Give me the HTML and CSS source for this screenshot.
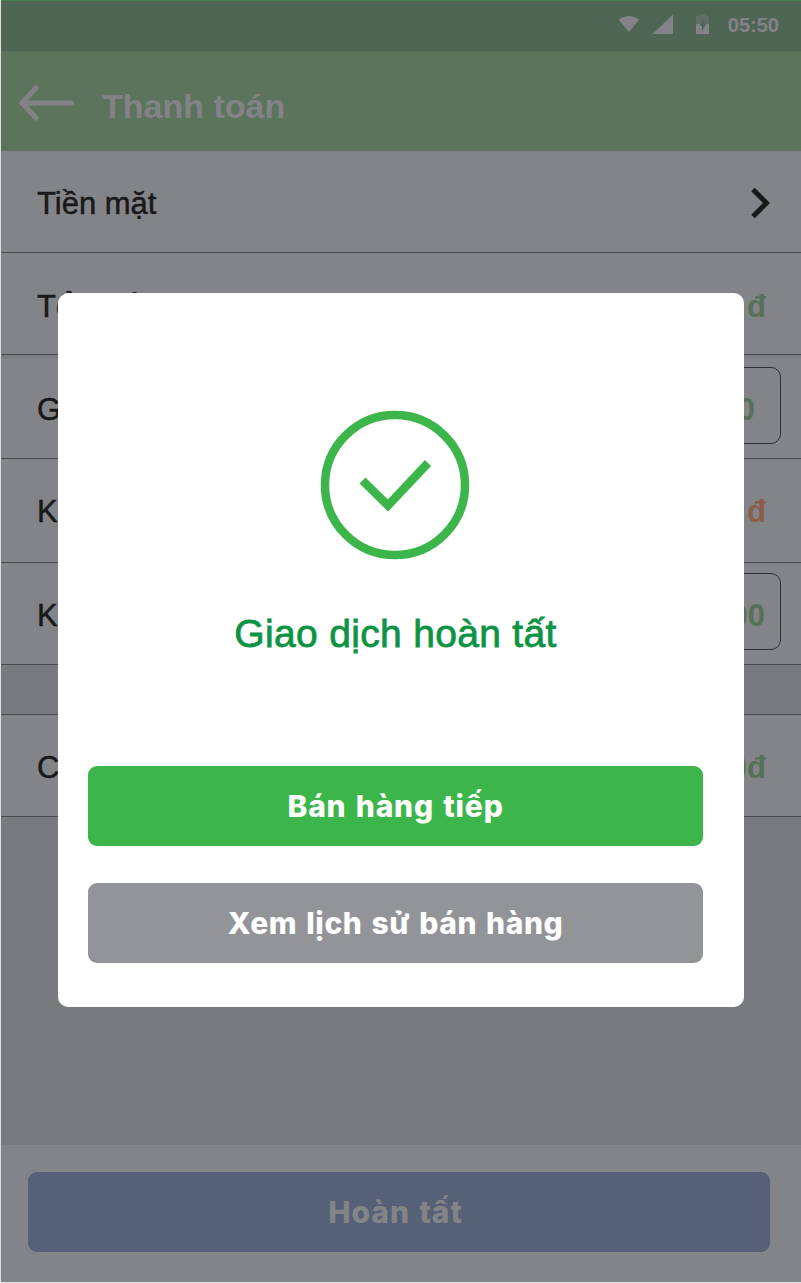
FILE: index.html
```html
<!DOCTYPE html>
<html lang="vi">
<head>
<meta charset="utf-8">
<title>Thanh toán</title>
<link rel="stylesheet" href="styles.css">
</head>
<body>
<div class="screen">
  <div class="status">
    <svg class="status-icons" width="100" height="24" viewBox="615 12 100 24">
      <path d="M618.500 19.500Q628.800 12.500 639 19.500L629 32Z"/>
      <path d="M673 14.500V34H652.500Z"/>
      <path class="faint" d="M696 24V16H699.500V14H705.500V16H709V24Z"/>
      <path d="M696 24H709V34H696Z"/>
      <path class="bolt" d="M704 18L699.500 26H702V31L706.500 23.500H704Z"/>
    </svg>
    <span class="clock">05:50</span>
  </div>
  <header class="header">
    <svg class="back" width="56" height="36" viewBox="0 0 56 36"><path d="M17 3L3 18L17 33M3 18H52.500"/></svg>
    <h1 class="title">Thanh toán</h1>
  </header>
  <main class="rows">
    <div class="row method"><span>Tiền mặt</span>
      <svg class="chevron" width="20" height="32" viewBox="0 0 20 32"><path d="M3 2.500L16.500 16L3 29.500"/></svg>
    </div>
    <div class="row total"><span>Tổng tiền</span><b class="amount">đ</b></div>
    <div class="row discount"><span>G</span><div class="field"><b class="amount">0</b></div></div>
    <div class="row due"><span>K</span><b class="amount orange">đ</b></div>
    <div class="row paid"><span>K</span><div class="field wide"><b class="amount">00</b></div></div>
    <div class="gap"></div>
    <div class="row change"><span>C</span><b class="amount">0đ</b></div>
  </main>
  <footer class="footer"><div class="button finish"><span class="label">Hoàn tất</span></div></footer>
  <section class="modal">
    <svg class="check" width="150" height="150" viewBox="0 0 150 150"><circle cx="75" cy="75" r="70"/><path d="M42.500 70.500L68 95.500L108 53"/></svg>
    <h2 class="message">Giao dịch hoàn tất</h2>
    <div class="button again"><span class="label">Bán hàng tiếp</span></div>
    <div class="button history"><span class="label">Xem lịch sử bán hàng</span></div>
  </section>
</div>
</body>
</html>
```
FILE: styles.css
```css
* { box-sizing: border-box; }
body { margin: 0; background: #dedfe0; font-family: "Liberation Sans", sans-serif; }
.screen { position: relative; width: 801px; height: 1283px; display: flex; flex-direction: column; padding: 0 0 1px 1px; }
.status { height: 51px; background: #506655; border-top: 1px solid #43834f; display: flex; justify-content: flex-end; align-items: center; padding: 0 22px 3px 0; color: #838387; }
.status-icons { fill: #838387; margin: 0 13px 2px 0; }
.status-icons .faint { fill: #5f7164; }
.status-icons .bolt { fill: #506655; }
.clock { font-size: 20px; font-weight: bold; padding-top: 1px; }
.header { height: 100px; background: #5b745b; display: flex; align-items: center; padding: 4px 0 0 18px; color: #838387; }
.back { fill: none; stroke: #838387; stroke-width: 5; stroke-linecap: round; stroke-linejoin: round; }
.title { margin: 5px 0 0 27px; font-size: 34px; line-height: 40px; font-weight: bold; }
.rows { flex: 1; background: #797a7e; }
.row { background: #838487; border-bottom: 1.500px solid #4b4b4d; display: flex; align-items: center; justify-content: space-between; padding: 5px 35px 0 36px; font-size: 31px; color: #19191a; -webkit-text-stroke: .5px; }
.method { height: 102px; padding-right: 31px; }
.chevron { fill: none; stroke: #19191a; stroke-width: 5; margin-bottom: 2px; }
.total { height: 102px; padding-top: 6px; }
.discount { height: 104px; padding-top: 7px; box-shadow: inset 0 3px #7b7c80; }
.due { height: 104px; padding-top: 3px; }
.paid { height: 102px; }
.gap { height: 50px; border-bottom: 1px solid #4b4b4d; }
.change { height: 102px; }
.amount { color: #567059; -webkit-text-stroke: 0; }
.orange { color: #8c5c4c; }
.field { width: 220px; height: 77px; margin: -10px -15px 0 0; border: 1px solid #303032; border-radius: 10px; display: flex; align-items: center; justify-content: flex-end; padding: 10px 25px 0 0; }
.wide { padding-right: 15px; }
.footer { height: 137px; background: #838487; padding: 27px 31px 0 27px; }
.button { height: 80px; border-radius: 9px; display: flex; align-items: center; justify-content: center; color: #fff; font-family: Inter, sans-serif; font-size: 30px; font-weight: 800; letter-spacing: .6px; word-spacing: 2px; }
.finish { padding-right: 7px; background: #566178; color: #838487; letter-spacing: .9px; }
.modal { position: absolute; left: 58px; top: 293px; width: 685.500px; height: 714px; border-radius: 10px; background: #fff; display: flex; flex-direction: column; align-items: center; padding: 117px 40.500px 0 30px; }
.check { flex: none; fill: none; stroke: #3cb54a; stroke-width: 8.500; margin-right: 1px; }
.message { margin: 49px 0 0; height: 50px; line-height: 50px; font-size: 39px; font-weight: normal; letter-spacing: .32px; color: #0c9444; -webkit-text-stroke: .8px; white-space: nowrap; }
.modal .button { align-self: stretch; flex: none; }
.again { margin-top: 107px; background: #3cb54a; letter-spacing: .8px; }
.modal .history { margin-top: 37px; background: #939498; letter-spacing: .55px; }
```
